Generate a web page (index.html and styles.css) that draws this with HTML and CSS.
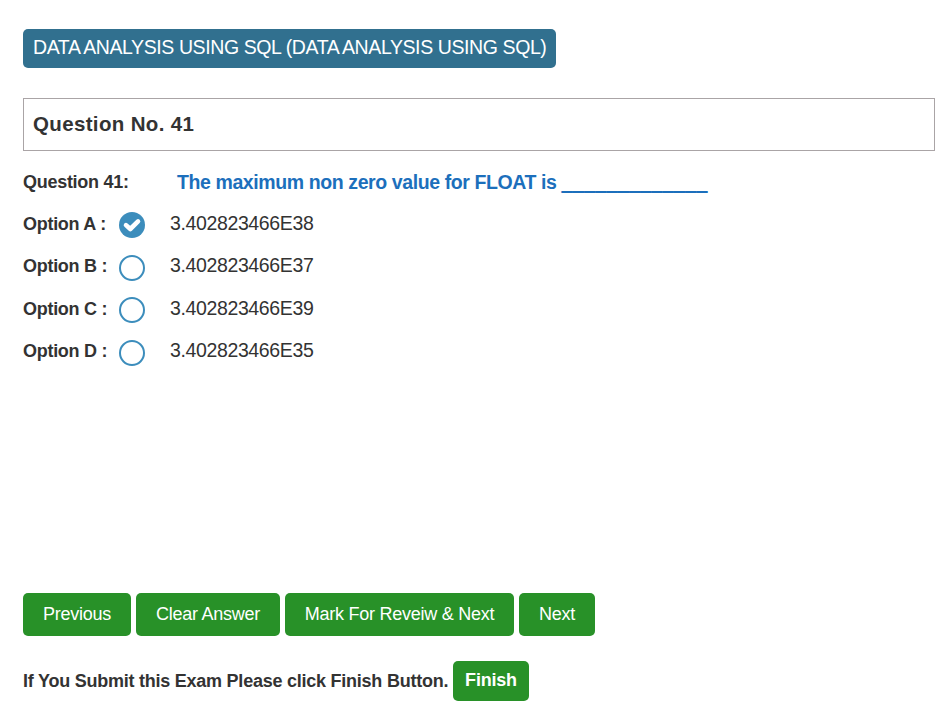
FILE: index.html
```html
<!DOCTYPE html>
<html lang="en">
<head>
<meta charset="utf-8">
<title>Data Analysis Using SQL</title>
<link rel="stylesheet" href="styles.css">
</head>
<body>
<main class="exam">
  <h1 class="subject">DATA<span class="tight"> </span>ANALYSIS USING SQL (DATA<span class="tight"> </span>ANALYSIS USING SQL)</h1>
  <h2 class="number">Question No. 41</h2>
  <section class="body">
    <div class="question"><b class="label">Question 41:</b><p class="prompt">The maximum non zero value for FLOAT is <span class="blank">_____________</span></p></div>
    <div class="option"><b class="label">Option A :</b><span class="radio checked"><svg viewBox="0 0 26 26"><path d="M7 13.1 11.3 17 19 9.4" /></svg></span><span class="value">3.402823466E38</span></div>
    <div class="option"><b class="label">Option B :</b><span class="radio"></span><span class="value">3.402823466E37</span></div>
    <div class="option"><b class="label">Option C :</b><span class="radio"></span><span class="value">3.402823466E39</span></div>
    <div class="option"><b class="label">Option D :</b><span class="radio"></span><span class="value">3.402823466E35</span></div>
  </section>
  <nav class="actions">
    <button class="btn previous">Previous</button>
    <button class="btn clear">Clear Answer</button>
    <button class="btn mark">Mark For Reveiw &amp; Next</button>
    <button class="btn next">Next</button>
  </nav>
  <footer class="submit"><b>If You Submit this Exam Please click Finish Button.</b><button class="finish">Finish</button></footer>
</main>
</body>
</html>
```
FILE: styles.css
```css
* { box-sizing: border-box; }
body { margin: 0; background: #fff; color: #333; font-family: "Liberation Sans", Arial, sans-serif; }
.exam { padding: 29px 9px 0 23px; }
.subject { width: 533px; height: 39px; margin: 0 0 30px; padding-left: 10px; border-radius: 5px; background: #31708f; color: #fff; font-size: 19.5px; font-weight: 400; line-height: 37px; letter-spacing: -.4px; white-space: nowrap; }
.tight { letter-spacing: -2.8px; }
.number { height: 53px; margin: 0; padding-left: 9px; border: 1px solid #aaa4a6; font-size: 20.5px; line-height: 50px; letter-spacing: .35px; }
.body { height: 442px; padding-top: 10px; }
.question { display: flex; height: 42px; line-height: 42px; }
.option { display: flex; height: 42.5px; }
.label { width: 96px; flex: none; font-size: 18px; line-height: 42px; letter-spacing: -.28px; white-space: nowrap; }
.question .label { width: 154px; }
.prompt { margin: 0; color: #1c6fbc; font-size: 19.5px; font-weight: 700; letter-spacing: -.4px; white-space: nowrap; }
.blank { font-size: 20.2px; letter-spacing: 0; line-height: 1; text-shadow: 0 1px #1c6fbc; }
.option .label, .value { margin-top: -.3px; }
.radio { width: 26px; height: 26px; flex: none; margin-top: 9px; border: 2px solid #3c8dbc; border-radius: 50%; }
.checked { border: 0; background: #3c8dbc; }
.radio svg { display: block; fill: none; stroke: #fff; stroke-width: 4.6; stroke-linecap: square; stroke-linejoin: round; stroke-linecap: round; }
.value { margin-left: 25px; font-size: 19.5px; line-height: 41px; letter-spacing: -.37px; }
.actions { display: flex; gap: 5px; height: 43px; }
.btn, .finish { padding: 0 0 1px; border: 0; border-radius: 5px; background: #289128; color: #fff; font: 18px "Liberation Sans", Arial, sans-serif; letter-spacing: -.25px; white-space: nowrap; }
.previous { width: 108px; }
.clear { width: 144px; }
.mark { width: 229px; }
.next { width: 76px; }
.submit { display: flex; height: 40px; margin-top: 25px; font-size: 18px; line-height: 40px; }
.submit b { width: 430px; letter-spacing: -.24px; white-space: nowrap; }
.finish { width: 76px; font-weight: 700; letter-spacing: -.2px; padding-bottom: 2px; }
```
